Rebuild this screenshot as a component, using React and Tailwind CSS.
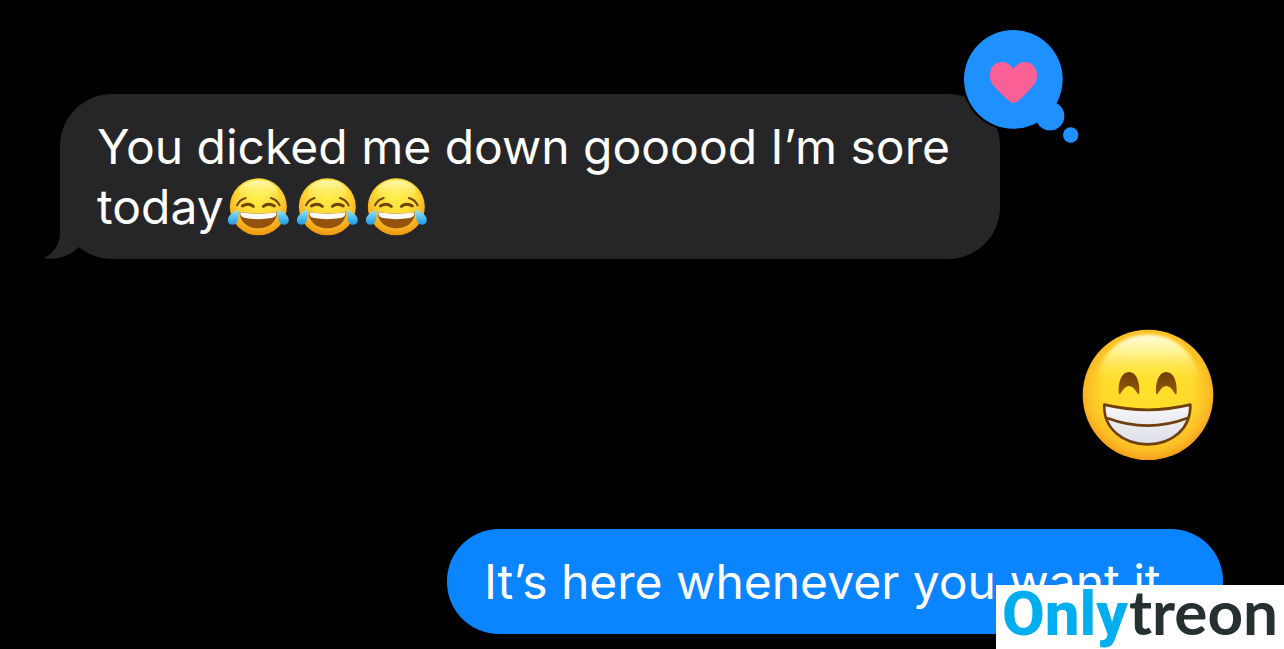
function JoyEmoji() {
  return (
    <svg role="img" aria-label="Face with tears of joy" viewBox="12 20 207 180" className="inline-block h-[60px] w-[69px] align-top">
      <defs>
        <radialGradient id="joyFace" cx="0.5" cy="0.3" r="0.72">
          <stop offset="0" stopColor="#fff04a" />
          <stop offset="0.5" stopColor="#fdd835" />
          <stop offset="0.85" stopColor="#f5a91c" />
          <stop offset="1" stopColor="#e8920c" />
        </radialGradient>
        <linearGradient id="joyShine" x1="0" y1="0" x2="0" y2="1">
          <stop offset="0" stopColor="#fffbc0" stopOpacity="0.9" />
          <stop offset="1" stopColor="#fff04a" stopOpacity="0" />
        </linearGradient>
        <linearGradient id="joyTear" x1="0" y1="0" x2="0" y2="1">
          <stop offset="0" stopColor="#9be6fb" />
          <stop offset="1" stopColor="#1a9be6" />
        </linearGradient>
      </defs>
      <circle cx="115" cy="109.500" r="85.500" fill="url(#joyFace)" />
      <ellipse cx="115" cy="64" rx="58" ry="34" fill="url(#joyShine)" />
      <g fill="none" stroke="#71450a" strokeLinecap="round">
        <path d="M51 105 Q59 88 77 83" strokeWidth="6" />
        <path d="M179 105 Q171 88 153 83" strokeWidth="6" />
        <path d="M67 107 Q85 96 100 108" strokeWidth="9" />
        <path d="M130 108 Q145 96 163 107" strokeWidth="9" />
      </g>
      <path d="M59 125 Q115 134 171 125 C171 157 144 174 115 174 S59 157 59 125Z" fill="#94520c" />
      <path d="M61 126 Q115 134 169 126 Q171 140 155 143 Q115 150 75 143 Q59 140 61 126Z" fill="#fafafa" />
      <path d="M54 117 C56 128 60 162 39 163 C18 163 22 141 31 133 C40 126 49 122 54 117Z" fill="url(#joyTear)" />
      <path d="M176 117 C174 128 170 162 191 163 C212 163 208 141 199 133 C190 126 181 122 176 117Z" fill="url(#joyTear)" />
    </svg>
  );
}

function GrinEmoji() {
  return (
    <svg role="img" aria-label="Beaming face with smiling eyes" viewBox="37 24 396 396" className="size-[132px]">
      <defs>
        <radialGradient id="grinFace" cx="0.5" cy="0.46" r="0.56">
          <stop offset="0" stopColor="#ffe12a" />
          <stop offset="0.6" stopColor="#fed92b" />
          <stop offset="0.84" stopColor="#fbbd25" />
          <stop offset="1" stopColor="#f2951a" />
        </radialGradient>
        <linearGradient id="grinShine" x1="0" y1="0" x2="0" y2="1">
          <stop offset="0" stopColor="#fffce0" />
          <stop offset="0.3" stopColor="#fff8a0" stopOpacity="0.85" />
          <stop offset="0.85" stopColor="#ffe52c" stopOpacity="0" />
        </linearGradient>
        <linearGradient id="grinEye" x1="0" y1="0" x2="0" y2="1">
          <stop offset="0" stopColor="#6f3d06" />
          <stop offset="1" stopColor="#965b08" />
        </linearGradient>
        <linearGradient id="grinTeeth" x1="0" y1="0" x2="0" y2="1">
          <stop offset="0" stopColor="#f7f7fa" />
          <stop offset="1" stopColor="#dcdfe6" />
        </linearGradient>
        <filter id="grinSoft" x="-10%" y="-10%" width="120%" height="120%">
          <feGaussianBlur stdDeviation="5" />
        </filter>
      </defs>
      <circle cx="235" cy="225" r="196" fill="url(#grinFace)" />
      <path d="M235 44 C325 44 380 110 388 180 C360 240 110 240 82 180 C90 110 145 44 235 44Z" fill="url(#grinShine)" filter="url(#grinSoft)" />
      <path d="M147 220 C145 183 157 156 178 156 S211 183 209 220 Q207 226 203 220 Q178 176 153 220 Q149 226 147 220Z" fill="url(#grinEye)" />
      <path d="M259 220 C257 183 269 156 290 156 S323 183 321 220 Q319 226 315 220 Q290 176 265 220 Q261 226 259 220Z" fill="url(#grinEye)" />
      <path d="M104 254 Q234 285 362 254 C364 326 306 373 234 373 S100 326 104 254Z" fill="url(#grinTeeth)" stroke="#70400c" strokeWidth="8" strokeLinejoin="round" />
      <path d="M112 294 Q234 340 354 294" fill="none" stroke="#70400c" strokeWidth="8" />
    </svg>
  );
}

function HeartReaction() {
  return (
    <svg role="img" aria-label="Loved" viewBox="66 54 354 351" className="absolute -top-[66px] -right-[80px] h-[117px] w-[118px]">
      <circle cx="220" cy="208" r="154" fill="#000" />
      <g fill="#1e90ff">
        <circle cx="220" cy="208" r="148" />
        <circle cx="330" cy="318" r="43" />
        <circle cx="392" cy="375" r="23" />
      </g>
      <path d="M220 177 C235 154 260 150 276 163 C294 178 296 206 281 225 C267 243 249 260 233 274 Q221 284 209 274 C193 260 173 243 159 225 C145 206 147 178 164 163 C181 150 206 154 220 177Z" fill="#fb6096" />
    </svg>
  );
}

function BubbleTail() {
  return (
    <svg aria-hidden="true" viewBox="0 0 52 52" className="absolute bottom-0 -left-[16px] size-[52px]">
      <path d="M16 0 V26 C16 37 10 46 0 51 C12 54 26 49 35 40 L42 0Z" fill="#262628" />
    </svg>
  );
}

export default function App() {
  return (
    <main className="relative flex min-h-screen flex-col gap-[69px] bg-black pt-[94px] pr-[61px] pb-[15px] pl-[60px] font-['Inter','Liberation_Sans',sans-serif] text-[48px] leading-[60px] text-white">
      <div className="relative w-full max-w-[940px] rounded-[52px] bg-[#262628] pt-[23px] pr-[38px] pb-[22px] pl-[37px]">
        <BubbleTail />
        <p className="relative">
          You dicked me down gooood I’m sore today
          <span className="whitespace-nowrap">
            <JoyEmoji />
            <JoyEmoji />
            <JoyEmoji />
          </span>
        </p>
        <HeartReaction />
      </div>

      <div className="mr-[9px] self-end">
        <GrinEmoji />
      </div>

      <div className="w-full max-w-[776px] self-end rounded-[52px] bg-[#0b84ff] pt-[23px] pr-[38px] pb-[22px] pl-[37px]">
        <p>It’s here whenever you want it</p>
      </div>

      <div className="absolute right-0 bottom-0 flex h-16 w-72 items-baseline justify-center gap-px bg-white text-[62px] leading-[52px] whitespace-nowrap">
        <span className="font-['Roboto',sans-serif] font-extrabold text-[#00aeef]">Only</span>
        <span className="font-['Lato',sans-serif] font-bold text-[#263033]">treon</span>
      </div>
    </main>
  );
}
